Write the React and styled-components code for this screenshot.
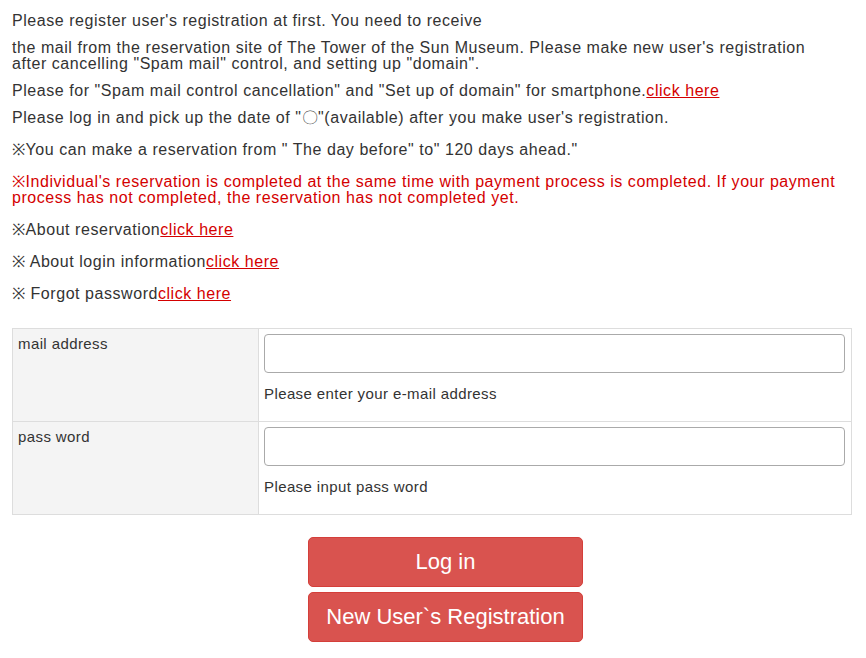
import React from 'react';
import styled, { createGlobalStyle } from 'styled-components';

const GlobalStyle = createGlobalStyle`
    body {
        margin: 0;
        background: #fff;
        font-family: 'Liberation Sans', Arial, sans-serif;
        color: #333;
    }
`;

const Page = styled.div`
    padding: 13px 14px 16px 12px;
`;

const Note = styled.p`
    margin: 0 0 ${(props) => (props.loose ? '16px' : '11px')};
    font-size: 16px;
    line-height: 16px;
    letter-spacing: 0.55px;
    color: ${(props) => (props.warn ? '#d40000' : '#333')};
`;

const Link = styled.a`
    color: #d40000;
    text-decoration: underline;
`;

const FormTable = styled.div`
    display: grid;
    grid-template-columns: 246px 1fr;
    margin-top: 26px;
    border: 1px solid #ddd;
`;

const LabelCell = styled.div`
    background: #f4f4f4;
    padding: 7px 5px;
    font-size: 15px;
    line-height: 16px;
    letter-spacing: 0.4px;
    border-right: 1px solid #ddd;
    border-top: ${(props) => (props.first ? 'none' : '1px solid #ddd')};
`;

const FieldCell = styled.div`
    padding: 5px 6px 0 5px;
    border-top: ${(props) => (props.first ? 'none' : '1px solid #ddd')};
`;

const TextInput = styled.input`
    display: block;
    box-sizing: border-box;
    width: 100%;
    height: 39px;
    border: 1px solid #aaa;
    border-radius: 4px;
    font-size: 15px;
    padding: 0 8px;
`;

const Help = styled.p`
    margin: 13px 0 19px;
    font-size: 15px;
    line-height: 16px;
    letter-spacing: 0.4px;
`;

const Buttons = styled.div`
    display: flex;
    flex-direction: column;
    align-items: center;
    gap: 5px;
    margin-top: 22px;
    padding-left: 27px;
`;

const Button = styled.button`
    width: 275px;
    height: 50px;
    border: 1px solid #d43f3a;
    border-radius: 5px;
    background: #d9534f;
    color: #fff;
    font-family: 'Liberation Sans', Arial, sans-serif;
    font-size: 22px;
    cursor: pointer;
`;

function App() {
    return (
        <Page>
            <GlobalStyle />
            <Note>Please register user's registration at first. You need to receive</Note>
            <Note>
                the mail from the reservation site of The Tower of the Sun Museum. Please make new user's registration
                <br />
                after cancelling "Spam mail" control, and setting up "domain".
            </Note>
            <Note>
                Please for "Spam mail control cancellation" and "Set up of domain" for smartphone.
                <Link href="#">click here</Link>
            </Note>
            <Note loose>Please log in and pick up the date of "〇"(available) after you make user's registration.</Note>
            <Note loose>※You can make a reservation from " The day before" to" 120 days ahead."</Note>
            <Note loose warn>
                ※Individual's reservation is completed at the same time with payment process is completed. If your payment
                process has not completed, the reservation has not completed yet.
            </Note>
            <Note loose>
                ※About reservation<Link href="#">click here</Link>
            </Note>
            <Note loose>
                ※ About login information<Link href="#">click here</Link>
            </Note>
            <Note>
                ※ Forgot password<Link href="#">click here</Link>
            </Note>

            <FormTable>
                <LabelCell first>mail address</LabelCell>
                <FieldCell first>
                    <TextInput type="text" />
                    <Help>Please enter your e-mail address</Help>
                </FieldCell>
                <LabelCell>pass word</LabelCell>
                <FieldCell>
                    <TextInput type="password" />
                    <Help>Please input pass word</Help>
                </FieldCell>
            </FormTable>

            <Buttons>
                <Button>Log in</Button>
                <Button>New User`s Registration</Button>
            </Buttons>
        </Page>
    );
}

export default App;
